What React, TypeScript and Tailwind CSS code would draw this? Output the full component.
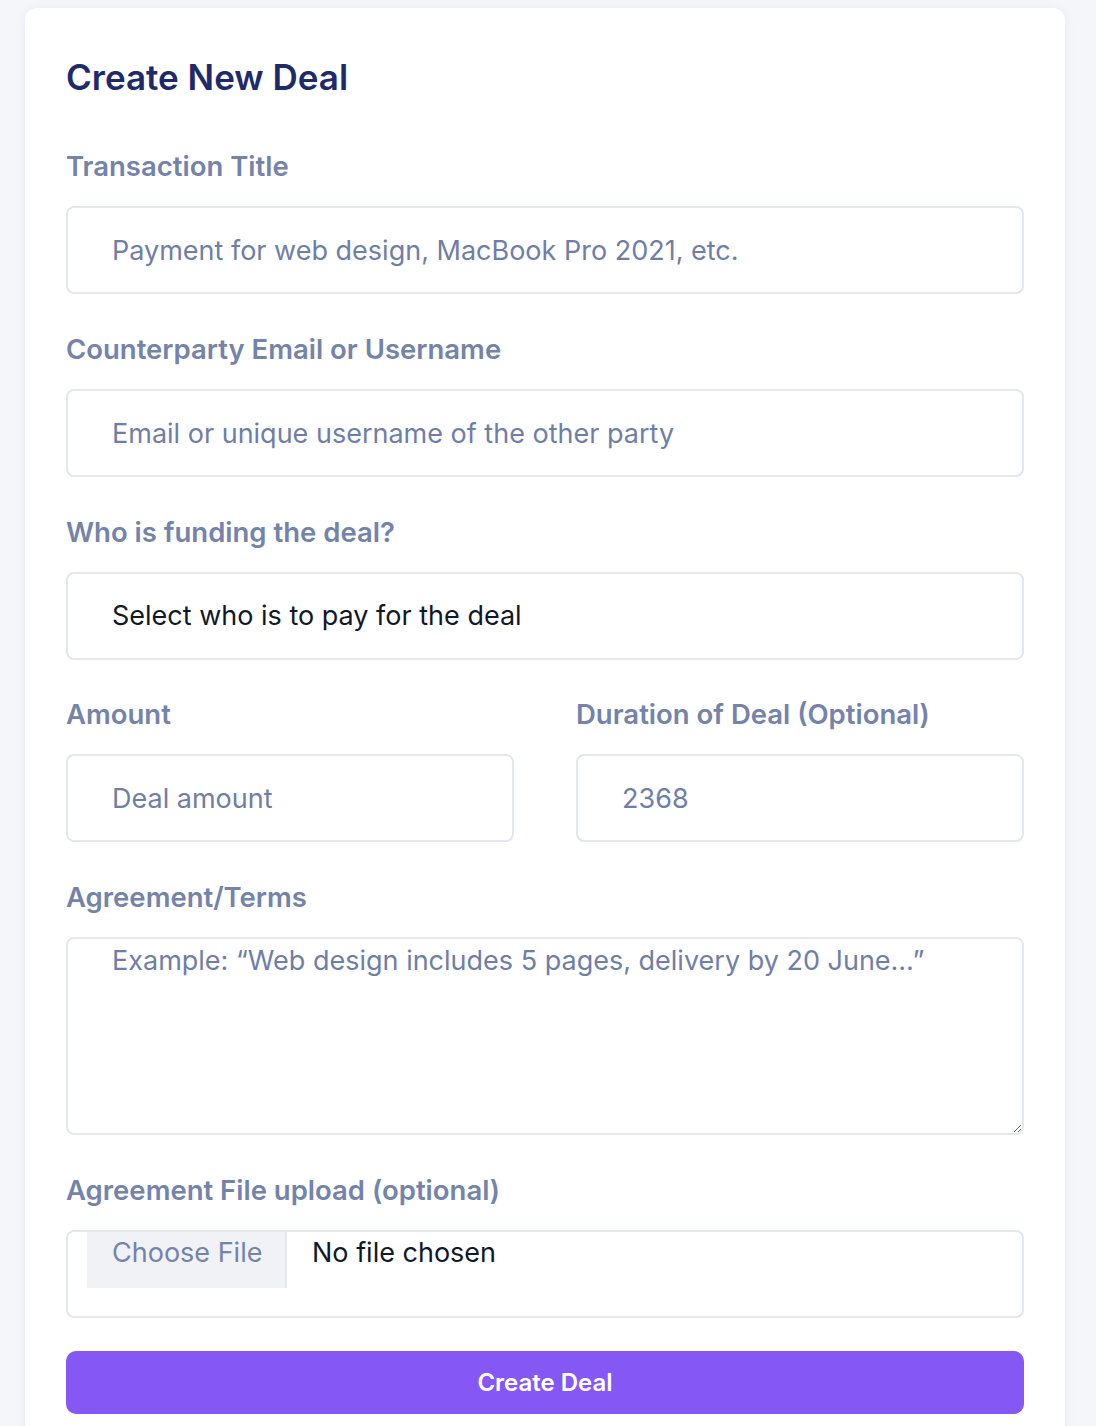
import { useState } from 'react';

const labelCls = 'block text-[27.5px] leading-[32px] font-semibold text-[#7483aa] mb-[24px]';
const inputCls =
  'block w-full h-[88px] rounded-[8px] border-2 border-[#e3e7ee] bg-white pl-[44px] pr-4 text-[27px] text-[#111827] placeholder:text-[#6f7ea8] outline-none';

export default function App() {
  const [title, setTitle] = useState('');
  const [party, setParty] = useState('');
  const [amount, setAmount] = useState('');
  const [duration, setDuration] = useState('');
  const [terms, setTerms] = useState('');

  return (
    <div className="min-h-[1426px] bg-[#f5f6fa] pl-[25px] pr-[31px] pt-[8px] font-['Inter',_'Noto_Sans',_sans-serif]">
      <div className="bg-white rounded-[12px] shadow-[0_0_12px_rgba(30,40,90,0.05)] px-[41px] pt-[49px] pb-[40px]">
        <h1 className="text-[35px] leading-[40px] font-semibold text-[#1f2a6b]">Create New Deal</h1>

        <div className="mt-[53px]">
          <label className={labelCls}>Transaction Title</label>
          <input
            className={inputCls}
            value={title}
            onChange={(e) => setTitle(e.target.value)}
            placeholder="Payment for web design, MacBook Pro 2021, etc."
          />
        </div>

        <div className="mt-[39px]">
          <label className={labelCls}>Counterparty Email or Username</label>
          <input
            className={inputCls}
            value={party}
            onChange={(e) => setParty(e.target.value)}
            placeholder="Email or unique username of the other party"
          />
        </div>

        <div className="mt-[39px]">
          <label className={labelCls}>Who is funding the deal?</label>
          <div className={inputCls + ' flex items-center'}>Select who is to pay for the deal</div>
        </div>

        <div className="mt-[38px] grid grid-cols-2 gap-[62px]">
          <div>
            <label className={labelCls}>Amount</label>
            <input
              className={inputCls}
              value={amount}
              onChange={(e) => setAmount(e.target.value)}
              placeholder="Deal amount"
            />
          </div>
          <div>
            <label className={labelCls}>Duration of Deal (Optional)</label>
            <input
              className={inputCls}
              value={duration}
              onChange={(e) => setDuration(e.target.value)}
              placeholder="2368"
            />
          </div>
        </div>

        <div className="mt-[39px]">
          <label className={labelCls}>Agreement/Terms</label>
          <textarea
            className="block w-full h-[198px] rounded-[8px] border-2 border-[#e3e7ee] bg-white pl-[44px] pr-4 pt-[5px] text-[27px] leading-[34px] text-[#111827] placeholder:text-[#6f7ea8] outline-none"
            value={terms}
            onChange={(e) => setTerms(e.target.value)}
            placeholder="Example: “Web design includes 5 pages, delivery by 20 June…”"
          />
        </div>

        <div className="mt-[39px]">
          <label className={labelCls}>Agreement File upload (optional)</label>
          <div className="h-[88px] rounded-[8px] border-2 border-[#e3e7ee] bg-white pl-[19px] flex items-start">
            <span className="h-[56px] w-[200px] bg-[#f1f2f5] border-r-2 border-[#e3e7ee] flex items-start pl-[25px] pt-[4px] text-[27px] leading-[34px] text-[#7483aa]">
              Choose File
            </span>
            <span className="ml-[25px] pt-[4px] text-[27px] leading-[34px] text-[#111827]">No file chosen</span>
          </div>
        </div>

        <button className="mt-[33px] w-full h-[63px] rounded-[10px] bg-[#8558f5] text-white text-[24px] font-semibold">
          Create Deal
        </button>
      </div>
    </div>
  );
}
